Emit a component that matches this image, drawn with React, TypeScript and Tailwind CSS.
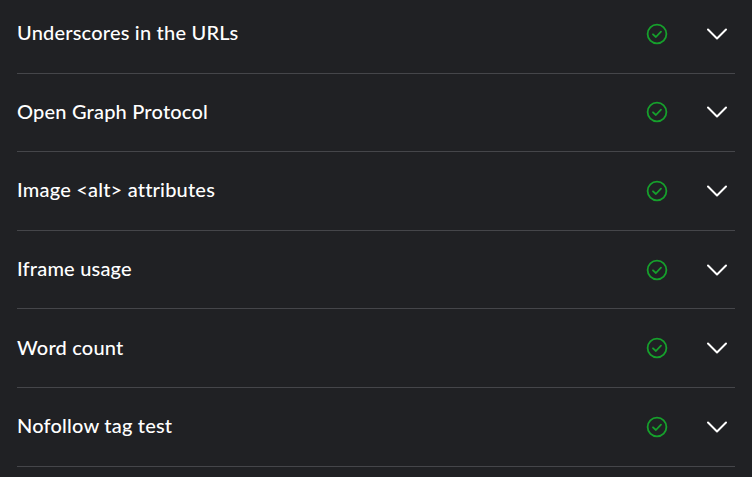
const checks = [
  'Underscores in the URLs',
  'Open Graph Protocol',
  'Image <alt> attributes',
  'Iframe usage',
  'Word count',
  'Nofollow tag test',
];

function PassIcon() {
  return (
    <svg width="22" height="22" viewBox="0 0 22 22" fill="none">
      <circle cx="11" cy="11" r="9.4" stroke="#16a02c" strokeWidth="1.8" />
      <path d="M7 11.3l2.9 2.7L15 8.7" stroke="#16a02c" strokeWidth="1.8" strokeLinecap="round" strokeLinejoin="round" />
    </svg>
  );
}

function Chevron() {
  return (
    <svg width="20" height="12" viewBox="0 0 20 12" fill="none">
      <path d="M1 1.5l9 9 9-9" stroke="#ffffff" strokeWidth="2" strokeLinecap="round" strokeLinejoin="round" />
    </svg>
  );
}

export default function App() {
  return (
    <div className="min-h-screen w-full bg-[#202124] overflow-hidden" style={{ fontFamily: 'Lato, "Noto Sans", sans-serif' }}>
      <div className="-mt-[5px] px-[17px]">
        {checks.map((name) => (
          <div
            key={name}
            className="flex items-center h-[78.6px] border-b border-[#45464a] pr-[8px]"
          >
            <span className="flex-1 pb-[3px] text-[20px] font-medium text-white tracking-[0.2px]">{name}</span>
            <div className="flex items-center justify-center w-[22px] mr-[39px]">
              <PassIcon />
            </div>
            <Chevron />
          </div>
        ))}
      </div>
    </div>
  );
}
